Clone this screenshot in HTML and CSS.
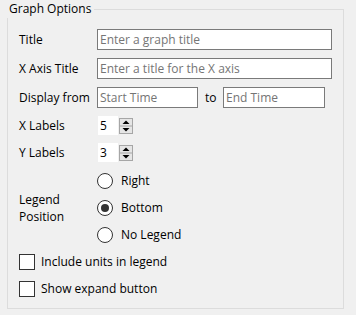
FILE: index.html
```html
<!DOCTYPE html>
<html>
<head>
<meta charset="utf-8">
<link rel="stylesheet" href="styles.css">
</head>
<body>
<div class="group">
  <div class="group-title">Graph Options</div>

  <div class="row">
    <span class="label">Title</span>
    <input class="text wide" type="text" placeholder="Enter a graph title">
  </div>
  <div class="row">
    <span class="label">X Axis Title</span>
    <input class="text wide" type="text" placeholder="Enter a title for the X axis">
  </div>
  <div class="row">
    <span class="label">Display from</span>
    <input class="text start" type="text" placeholder="Start Time">
    <span class="to">to</span>
    <input class="text end" type="text" placeholder="End Time">
  </div>

  <div class="row spin-row">
    <span class="label">X Labels</span>
    <span class="num">5</span>
    <svg class="spinner" width="14" height="16" viewBox="0 0 14 16">
      <rect x="0.5" y="0.5" width="13" height="15" fill="#e5e5e5" stroke="#a6a6a6"/>
      <line x1="0" y1="8" x2="14" y2="8" stroke="#a6a6a6"/>
      <polygon points="3.5,6 10.5,6 7,2.5" fill="#000"/>
      <polygon points="3.5,10 10.5,10 7,13.5" fill="#000"/>
    </svg>
  </div>
  <div class="row spin-row">
    <span class="label">Y Labels</span>
    <span class="num">3</span>
    <svg class="spinner" width="14" height="16" viewBox="0 0 14 16">
      <rect x="0.5" y="0.5" width="13" height="15" fill="#e5e5e5" stroke="#a6a6a6"/>
      <line x1="0" y1="8" x2="14" y2="8" stroke="#a6a6a6"/>
      <polygon points="3.5,6 10.5,6 7,2.5" fill="#000"/>
      <polygon points="3.5,10 10.5,10 7,13.5" fill="#000"/>
    </svg>
  </div>

  <div class="legend-block">
    <span class="label legend-label">Legend<br>Position</span>
    <div class="radios">
      <div class="radio-row"><span class="radio"></span><span>Right</span></div>
      <div class="radio-row"><span class="radio checked"></span><span>Bottom</span></div>
      <div class="radio-row"><span class="radio"></span><span>No Legend</span></div>
    </div>
  </div>

  <div class="check-row"><span class="check"></span><span>Include units in legend</span></div>
  <div class="check-row"><span class="check"></span><span>Show expand button</span></div>
</div>
</body>
</html>
```

FILE: styles.css
```css
html, body {
  margin: 0;
  padding: 0;
  background: #f0f0f0;
}

body {
  font-family: "Open Sans", "Noto Sans", sans-serif;
  font-size: 12px;
  color: #000;
}

.group {
  position: relative;
  box-sizing: border-box;
  width: 337px;
  height: 300px;
  margin: 9px 0 0 7px;
  border: 1px solid #dcdcdc;
  padding: 19px 0 0 11px;
}

.group-title {
  position: absolute;
  top: -10px;
  left: -2px;
  padding: 0 3px 0 3px;
  height: 18px;
  line-height: 18px;
  background: #f0f0f0;
}

.row {
  display: flex;
  align-items: center;
  height: 21px;
  margin-bottom: 8px;
}

.label {
  width: 78px;
  flex: none;
  line-height: 17px;
}

.text {
  box-sizing: border-box;
  height: 21px;
  margin: 0;
  border: 1px solid #7a7a7a;
  background: #fff;
  padding: 0 0 0 2px;
  font-family: inherit;
  font-size: 12px;
  color: #000;
  outline: none;
}

.text::placeholder {
  color: #757575;
  opacity: 1;
}

.wide {
  width: 235px;
}

.start {
  width: 101px;
}

.to {
  width: 18px;
  margin-left: 7px;
}

.end {
  width: 102px;
}

.spin-row {
  height: 19px;
}

.num {
  box-sizing: border-box;
  width: 20px;
  height: 19px;
  margin-left: 1px;
  padding-left: 2px;
  background: #fff;
  line-height: 19px;
}

.spinner {
  display: block;
  margin-left: 1px;
  margin-top: 1px;
}

.legend-block {
  display: flex;
  align-items: center;
  margin-top: -3px;
}

.legend-label {
  line-height: 17px;
}

.radios {
  display: flex;
  flex-direction: column;
}

.radio-row {
  display: flex;
  align-items: center;
  height: 27px;
}

.radio {
  box-sizing: border-box;
  width: 16px;
  height: 16px;
  border: 1px solid #333;
  border-radius: 50%;
  background: #fff;
  margin-right: 8px;
  display: flex;
  align-items: center;
  justify-content: center;
}

.radio.checked::after {
  content: "";
  width: 8px;
  height: 8px;
  border-radius: 50%;
  background: #333;
}

.check-row {
  display: flex;
  align-items: center;
  height: 27px;
}

.check {
  box-sizing: border-box;
  width: 16px;
  height: 16px;
  border: 1px solid #333;
  background: #fff;
  margin-right: 6px;
}
```
